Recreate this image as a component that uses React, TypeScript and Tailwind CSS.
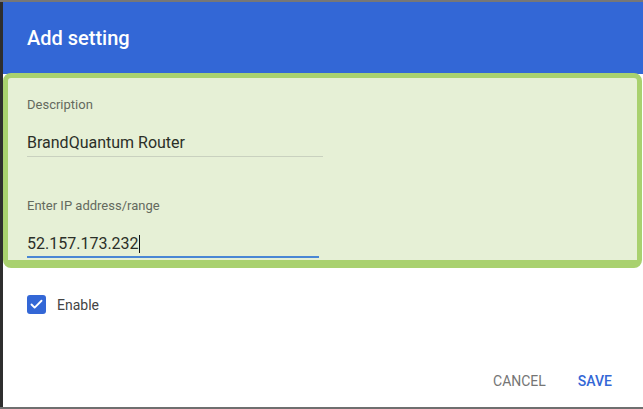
import { Check } from "lucide-react";

export default function App() {
  return (
    <div className="w-[643px] h-[409px] flex flex-col bg-white font-['Roboto',sans-serif] overflow-hidden">
      {/* backdrop strip above the dialog */}
      <div className="h-[2px] bg-[#777777] shrink-0" />

      <div className="flex flex-1 min-h-0">
        {/* backdrop strip left of the dialog */}
        <div className="w-[3px] bg-[#2e2e2e] shrink-0" />

        <div className="flex-1 flex flex-col bg-white">
          {/* Header */}
          <div className="h-[72px] shrink-0 bg-[#3367d6] flex items-center pl-[24px]">
            <h1 className="text-white text-[20px] font-medium leading-[24px]">
              Add setting
            </h1>
          </div>

          {/* Highlighted fields */}
          <div className="-mt-px mr-[1px] rounded-[8px] border-[5px] border-b-[8px] border-[#a9d16f] bg-[#e6f0d6] pl-[19px] pt-[19px] pb-[2px]">
            <div className="text-[13px] leading-[16px] text-[#646a5e]">
              Description
            </div>
            <div className="mt-[20px] w-[296px] pb-[3px] border-b border-[#c9d1bf] text-[16px] leading-[20px] text-[#2b2f28]">
              BrandQuantum Router
            </div>

            <div className="mt-[41px] text-[13px] leading-[16px] text-[#646a5e]">
              Enter IP address/range
            </div>
            <div className="mt-[20px] w-[292px] pb-[2px] border-b-2 border-[#4a87d4] text-[16px] leading-[20px] text-[#2b2f28] flex items-center">
              <span>52.157.173.232</span>
              <span className="inline-block w-px h-[18px] bg-[#111111]" />
            </div>
          </div>

          {/* Enable */}
          <div className="mt-[27px] pl-[24px] flex items-center gap-[11px]">
            <div className="w-[19px] h-[19px] rounded-[3px] bg-[#3367d6] flex items-center justify-center">
              <Check className="w-[15px] h-[15px] text-white" strokeWidth={3} />
            </div>
            <span className="text-[14px] leading-[16px] text-[#444444]">Enable</span>
          </div>

          {/* Actions */}
          <div className="mt-[59px] flex justify-end gap-[32px] pr-[31px] text-[14px] leading-[16px]">
            <button className="text-[#757575]">CANCEL</button>
            <button className="text-[#3367d6] font-medium">SAVE</button>
          </div>

          <div className="flex-1" />
        </div>
      </div>

      {/* backdrop strip below */}
      <div className="h-[2px] bg-[#6f6f6f] shrink-0" />
    </div>
  );
}
